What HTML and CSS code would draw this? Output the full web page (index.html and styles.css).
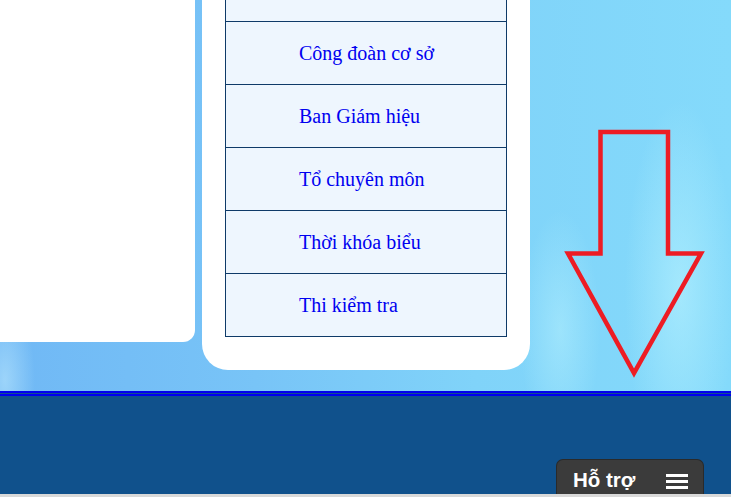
FILE: index.html
```html
<!DOCTYPE html>
<html lang="vi">
<head>
<meta charset="utf-8">
<title>Menu</title>
<link rel="stylesheet" href="styles.css">
</head>
<body>
<div class="stage">
  <div class="columns">
    <div class="panel-left"></div>
    <div class="panel-center">
      <ul class="menu">
        <li class="row row-cut"></li>
        <li class="row"><a href="#">Công đoàn cơ sở</a></li>
        <li class="row"><a href="#">Ban Giám hiệu</a></li>
        <li class="row"><a href="#">Tổ chuyên môn</a></li>
        <li class="row"><a href="#">Thời khóa biểu</a></li>
        <li class="row"><a href="#">Thi kiểm tra</a></li>
      </ul>
    </div>
  </div>
  <svg class="arrow" width="150" height="260" viewBox="0 0 150 260">
    <polygon points="40.5,7 108,7 108,128.5 141,128.5 74,248 8,128.5 40.5,128.5" fill="none" stroke="#ed1c24" stroke-width="4.5" stroke-linejoin="miter"/>
  </svg>
</div>
<div class="rule"></div>
<footer class="footer"></footer>
<div class="bottom-strip"></div>
<button class="support" type="button">Hỗ trợ <span class="burger"><i></i><i></i><i></i></span></button>
</body>
</html>
```
FILE: styles.css
```css
html, body {
  margin: 0;
  padding: 0;
}
body {
  width: 731px;
  height: 497px;
  overflow: hidden;
  font-family: "Liberation Serif", "Times New Roman", serif;
}
.stage {
  position: relative;
  height: 391px;
  overflow: hidden;
  background-color: #7ecbf8;
  background-image:
    radial-gradient(ellipse 55px 190px at 680px 290px, rgba(190, 245, 255, 0.55), rgba(190, 245, 255, 0) 100%),
    radial-gradient(ellipse 40px 120px at 560px 330px, rgba(190, 245, 255, 0.45), rgba(190, 245, 255, 0) 100%),
    radial-gradient(ellipse 30px 80px at 5px 380px, rgba(200, 240, 255, 0.5), rgba(200, 240, 255, 0) 100%),
    linear-gradient(90deg, #70b8f5 0%, #78c4f7 35%, #80d3f9 65%, #84dafb 100%);
}
.columns {
  display: flex;
  align-items: flex-start;
  gap: 7px;
}
.panel-left {
  width: 195px;
  height: 342px;
  background: #ffffff;
  border-bottom-right-radius: 12px;
}
.panel-center {
  width: 328px;
  height: 370px;
  box-sizing: border-box;
  padding: 0 23px;
  background: #ffffff;
  border-radius: 0 0 26px 26px;
}
.menu {
  list-style: none;
  margin: 0;
  padding: 0;
  border-left: 1px solid #0e3a68;
  border-right: 1px solid #0e3a68;
  background: #eef6fe;
}
.row {
  height: 62px;
  border-bottom: 1px solid #0e3a68;
  display: flex;
  align-items: center;
  padding-left: 73px;
}
.row-cut {
  height: 21px;
}
.row a {
  color: #0000f0;
  text-decoration: none;
  font-size: 20px;
}
.arrow {
  position: absolute;
  left: 560px;
  top: 125px;
}
.rule {
  height: 1px;
  background: #10518c;
  border-top: 2px solid #0000ee;
  border-bottom: 2px solid #0000ee;
}
.footer {
  height: 98px;
  background: #10518c;
}
.bottom-strip {
  height: 3px;
  background: #d9d9d9;
}
.support {
  position: fixed;
  left: 556px;
  top: 459px;
  width: 148px;
  height: 35px;
  box-sizing: border-box;
  margin: 0;
  padding: 8px 0 0 16px;
  display: flex;
  align-items: flex-start;
  gap: 31px;
  background: #3b3b3b;
  border: 1px solid #2a2a2a;
  border-bottom: 0;
  border-radius: 7px 7px 0 0;
  color: #ffffff;
  font-family: "Liberation Sans", Arial, sans-serif;
  font-weight: bold;
  font-size: 20.5px;
  line-height: 24px;
  text-align: left;
}
.burger {
  display: flex;
  flex-direction: column;
  gap: 3px;
  padding-top: 6px;
}
.burger i {
  display: block;
  width: 22px;
  height: 3px;
  background: #ffffff;
}
```
